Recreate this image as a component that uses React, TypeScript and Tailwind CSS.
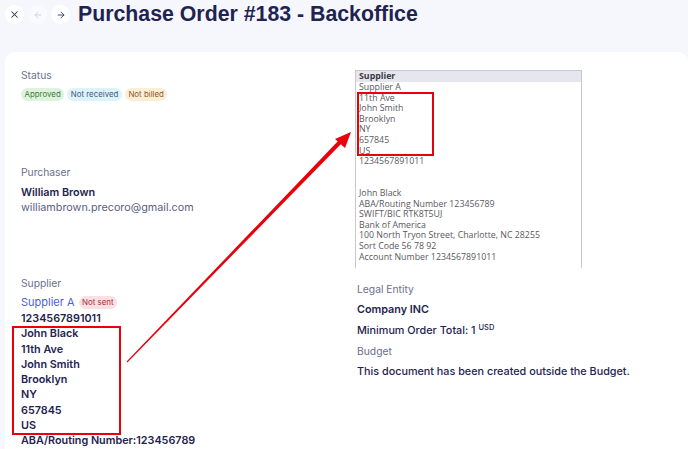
import { X, ArrowLeft, ArrowRight } from 'lucide-react'

const inter = { fontFamily: 'Inter, "Noto Sans", sans-serif' }

function Badge({ children, className }: { children: React.ReactNode; className: string }) {
  return (
    <span className={`inline-flex items-center h-[13px] px-[3.5px] rounded-full text-[7.9px] leading-none ${className}`}>
      {children}
    </span>
  )
}

const supplierLines = ['John Black', '11th Ave', 'John Smith', 'Brooklyn', 'NY', '657845', 'US']

const boxTop = ['Supplier A', '11th Ave', 'John Smith', 'Brooklyn', 'NY', '657845', 'US', '1234567891011', '', '']
const boxBottom = [
  'John Black',
  'ABA/Routing Number 123456789',
  'SWIFT/BIC RTK8T5UJ',
  'Bank of America',
  '100 North Tryon Street, Charlotte, NC 28255',
  'Sort Code 56 78 92',
  'Account Number 1234567891011',
]

export default function App() {
  return (
    <div className="relative w-full h-[449px] overflow-hidden bg-[#f6f7fd] text-[#1f2450]" style={inter}>
      {/* header */}
      <div className="flex items-center h-[28px] pl-[5px] pt-[1px] gap-[4px]">
        <button className="w-[19px] h-[19px] rounded-full bg-white flex items-center justify-center text-[#2a2f55]">
          <X className="w-[11px] h-[11px]" strokeWidth={2.2} />
        </button>
        <button className="w-[19px] h-[19px] rounded-full bg-[#f9faff] flex items-center justify-center text-[#c9cbd8]">
          <ArrowLeft className="w-[10px] h-[10px]" strokeWidth={2} />
        </button>
        <button className="w-[19px] h-[19px] rounded-full bg-white flex items-center justify-center text-[#2a2f55]">
          <ArrowRight className="w-[10px] h-[10px]" strokeWidth={2} />
        </button>
        <h1
          className="ml-[4px] text-[21.3px] font-bold leading-none text-[#1e2350]"
          style={{ fontFamily: '"Liberation Sans", Arial, sans-serif' }}
        >
          Purchase Order #183 - Backoffice
        </h1>
      </div>

      {/* card */}
      <div className="absolute left-[5px] right-0 top-[52px] bottom-0 bg-white rounded-t-[10px]">
        <div className="flex">
          {/* left column */}
          <div className="w-[350px] pl-[16px] pt-[17px]">
            <div className="text-[10.3px] leading-[13px] text-[#6a6f8c]">Status</div>
            <div className="flex gap-[3px] mt-[6px]">
              <Badge className="bg-[#def3dc] text-[#3f7a40]">Approved</Badge>
              <Badge className="bg-[#ddf3fb] text-[#4a5a7c]">Not received</Badge>
              <Badge className="bg-[#fbeed5] text-[#8b5a2b]">Not billed</Badge>
            </div>

            <div className="mt-[65px] text-[10.3px] leading-[13px] text-[#6a6f8c]">Purchaser</div>
            <div className="mt-[6px] text-[10.8px] leading-[15px] font-semibold">William Brown</div>
            <div className="text-[10.8px] leading-[15px] text-[#5b6080]">williambrown.precoro@gmail.com</div>

            <div className="mt-[62px] text-[10.3px] leading-[13px] text-[#6a6f8c]">Supplier</div>
            <div className="mt-[4px] flex items-center gap-[4px]">
              <span className="text-[11px] leading-[17px] text-[#4c5fd6]">Supplier A</span>
              <Badge className="bg-[#fbe0e3] text-[#a3303c]">Not sent</Badge>
            </div>
            <div className="text-[10.8px] leading-[15.3px] font-semibold">
              <div>1234567891011</div>
              <div className="relative">
                <div className="absolute left-[-9px] top-[-0.5px] w-[109px] h-[109px] border-2 border-[#e8000b]" />
                {supplierLines.map((l) => (
                  <div key={l}>{l}</div>
                ))}
              </div>
              <div>ABA/Routing Number:123456789</div>
            </div>
          </div>

          {/* right column */}
          <div className="flex-1 pt-[18px]">
            <div
              className="relative w-[227px] h-[198px] border border-[#c6c8d2] border-b-0 text-[8.8px] leading-[10.6px] text-[#58595e]"
              style={{ fontFamily: '"Open Sans", sans-serif' }}
            >
              <div className="bg-[#e6e7ee] px-[3px] font-bold text-[#3b3c44] leading-[11px]">Supplier</div>
              <div className="px-[3px]">
                {boxTop.map((l, i) => (
                  <div key={i} className="h-[10.6px] leading-[10.6px] whitespace-nowrap">{l}</div>
                ))}
                {boxBottom.map((l, i) => (
                  <div key={i} className="h-[10.6px] leading-[10.6px] whitespace-nowrap">{l}</div>
                ))}
              </div>
              <div className="absolute left-[1px] top-[21px] w-[77px] h-[64px] border-2 border-[#e8000b]" />
            </div>

            <div className="pl-[2px]">
              <div className="mt-[15px] text-[10.3px] leading-[13px] text-[#6a6f8c]">Legal Entity</div>
              <div className="mt-[6px] text-[10.8px] leading-[15px] font-semibold">Company INC</div>
              <div className="mt-[6px] text-[10.8px] leading-[15px] font-medium">
                Minimum Order Total: 1 <sup className="text-[7.5px]">USD</sup>
              </div>
              <div className="mt-[7px] text-[10.3px] leading-[13px] text-[#6a6f8c]">Budget</div>
              <div className="mt-[6px] text-[10.8px] leading-[15px] font-medium">
                This document has been created outside the Budget.
              </div>
            </div>
          </div>
        </div>
      </div>

      {/* arrow annotation */}
      <svg className="absolute left-0 top-0 pointer-events-none" width="688" height="449" viewBox="0 0 688 449">
        <polygon points="126.6,361.6 127.4,362.4 343,142 340,139" fill="#e8000b" />
        <polygon points="351,132 335,139 345,148" fill="#e8000b" />
      </svg>
    </div>
  )
}
